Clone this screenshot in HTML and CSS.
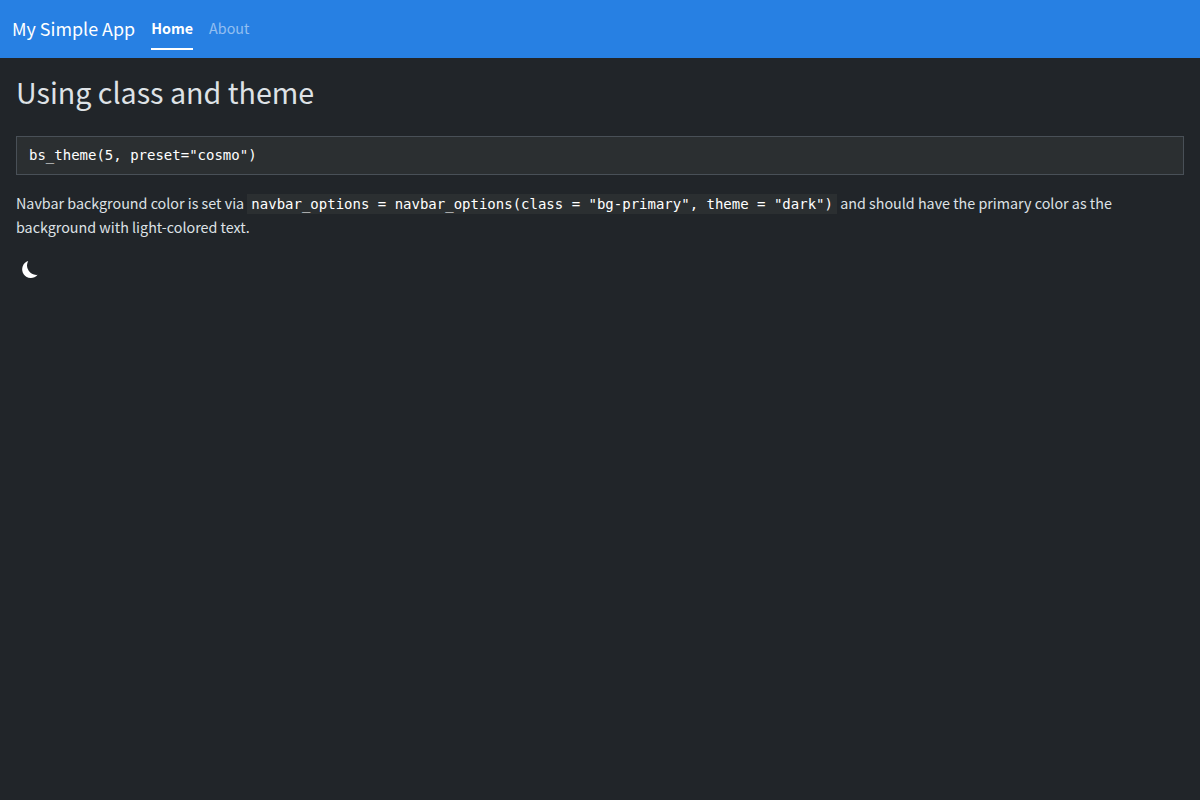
FILE: index.html
```html
<!DOCTYPE html>
<html lang="en">
<head>
<meta charset="utf-8">
<title>My Simple App</title>
<link rel="stylesheet" href="styles.css">
</head>
<body>
<nav class="navbar">
  <a class="navbar-brand">My Simple App</a>
  <div class="navbar-nav">
    <a class="nav-link active">Home</a>
    <a class="nav-link">About</a>
  </div>
</nav>
<main class="content">
  <h2 class="title">Using class and theme</h2>
  <pre class="code-block"><code>bs_theme(5, preset="cosmo")</code></pre>
  <p class="text">Navbar background color is set via <code class="code">navbar_options = navbar_options(class = "bg-primary", theme = "dark")</code> and should have the primary color as the background with light-colored text.</p>
  <button class="mode-toggle" aria-label="Toggle dark mode">
    <svg width="18" height="19" viewBox="0 0 18 19"><path d="M7.2 1A8.7 8.7 0 1 0 16.6 14.8A9.4 9.4 0 0 1 7.2 1Z" fill="#fff"/></svg>
  </button>
</main>
</body>
</html>
```
FILE: styles.css
```css
* { box-sizing: border-box; }
body {
  margin: 0;
  background: #212529;
  color: #dee2e6;
  font: 14.32px/24px "Noto Sans CJK JP", sans-serif;
}
.navbar {
  display: flex;
  align-items: center;
  height: 58px;
  padding: 0 12px;
  gap: 16px;
  background: #2780e3;
  color: #fff;
}
.navbar-brand { padding-bottom: 2px; font-size: 17.9px; line-height: 30px; }
.navbar-nav { display: flex; gap: 16px; }
.nav-link {
  padding: 8px 0;
  border-bottom: 2px solid transparent;
  color: rgba(255, 255, 255, .5);
}
.nav-link.active { color: #fff; font-weight: 700; border-color: #fff; }
.content { padding: 16px; }
.title { margin: 0 0 26px; font-size: 28.65px; font-weight: 400; line-height: 36px; }
code { font: 14px/21px "DejaVu Sans Mono", monospace; color: #fff; }
.code-block {
  display: flex;
  height: 39px;
  margin: 0 0 16px;
  padding: 8px 12px;
  border: 1px solid #495057;
  background: #2b2f31;
}
.text { margin: 0 0 16px; }
.code { padding: 2px 4px; background: #2b2f31; }
.mode-toggle {
  display: block;
  padding: 5px;
  border: 0;
  background: none;
}
.mode-toggle svg { display: block; }
```
